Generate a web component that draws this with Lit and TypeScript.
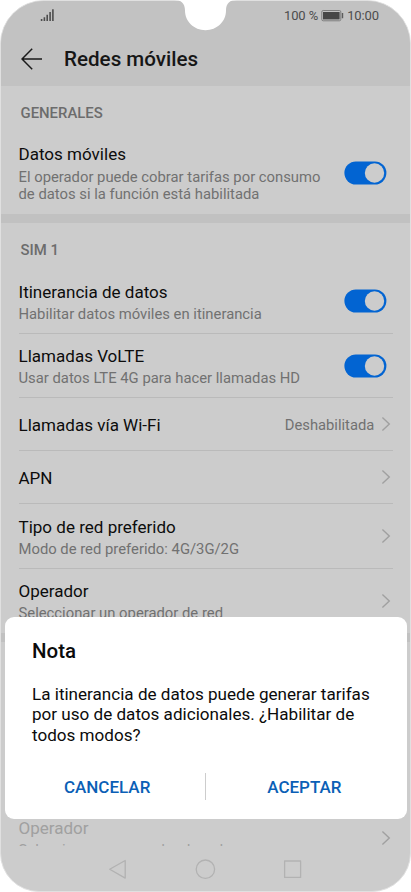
import { LitElement, html, svg, css, nothing } from "lit";
import { customElement, property } from "lit/decorators.js";

@customElement("status-bar")
class StatusBar extends LitElement {
  static styles = css`
    :host { display: flex; justify-content: space-between; height: 30px; padding: 0 31px 0 39px; color: #4d4d4d; }
    .right { display: flex; align-items: flex-start; font-size: 13px; line-height: 16px; padding-top: 7px; letter-spacing: -0.1px; }
    svg { display: block; }
    .signal { margin-top: 7px; }
    .battery { margin: 1px 3px 0 3px; }
  `;
  render() {
    return html`
      <svg class="signal" width="15" height="14" viewBox="0 0 15 14" fill="#4d4d4d">
        <path d="M.8 11h1.6v2H.8zM3.6 9.3h1.6V13H3.6zM6.4 6.7H8V13H6.4zM9.3 4h1.6v9H9.3zM12.1 1.3h1.6V13h-1.6z" />
      </svg>
      <div class="right">
        <span>100 %</span>
        <svg class="battery" width="23" height="13" viewBox="0 0 23 13">
          <rect x="0.8" y="1.5" width="19" height="10.3" rx="1.4" fill="none" stroke="#777" stroke-width="0.9" />
          <rect x="2" y="3" width="16.6" height="7.4" fill="#474747" />
          <path d="M20.8 4h1.4v5.2h-1.4z" fill="#5c5c5c" />
        </svg>
        <span>10:00</span>
      </div>
    `;
  }
}

@customElement("settings-row")
class SettingsRow extends LitElement {
  @property() label = "";
  @property() detail = "";
  @property() value = "";
  @property() control = "chevron";

  static styles = css`
    :host { display: flex; align-items: center; justify-content: space-between; box-sizing: border-box; margin-left: 17.5px; margin-right: 17.5px; border-bottom: 1px solid #bababa; }
    .text { padding-top: 2px; }
    .title { font-size: 17.05px; line-height: 20px; color: #0c0c0c; white-space: nowrap; }
    .detail { font-size: 14.82px; line-height: 17.5px; color: #717171; margin: 4.2px 0 -0.9px; white-space: pre; }
    .end { display: flex; align-items: center; flex: none; }
    .value { font-size: 14.75px; line-height: 18px; color: #717171; margin-right: 6.5px; padding-top: 1px; }
    .chevron { display: block; margin-right: 1.7px; }
    .toggle { display: block; margin-right: 5.8px; }
    :host([disabled]) .title, :host([disabled]) .detail { color: #a0a0a0; }
    :host([last]) { border-bottom-color: transparent; }
  `;

  render() {
    return html`
      <div class="text">
        <div class="title">${this.label}</div>
        ${this.detail ? html`<div class="detail">${this.detail}</div>` : nothing}
      </div>
      <div class="end">
        ${this.value ? html`<span class="value">${this.value}</span>` : nothing}
        ${this.control === "toggle"
          ? html`<svg class="toggle" width="43" height="24" viewBox="0 0 43 24">
              <rect x="0.4" y="0.5" width="42" height="23" rx="11.5" fill="#0264d2" />
              <circle cx="30.5" cy="12" r="9.7" fill="#ccc" />
            </svg>`
          : html`<svg class="chevron" width="10" height="16" viewBox="0 0 10 16">
              <path d="M1.4 1.4 8.3 8 1.4 14.6" fill="none" stroke="#a0a0a0" stroke-width="1.4" />
            </svg>`}
      </div>
    `;
  }
}

@customElement("confirm-dialog")
class ConfirmDialog extends LitElement {
  static styles = css`
    :host { display: flex; flex-direction: column; box-sizing: border-box; background: #fff; border-radius: 9px; color: #0b0b0b; padding-top: 21px; }
    .heading { font-size: 20.5px; line-height: 26px; font-weight: 500; padding-left: 27px; }
    .message { font-size: 17.08px; line-height: 20.4px; padding-left: 27px; margin-top: 20px; white-space: pre; }
    .actions { display: flex; align-items: center; margin-top: 28px; height: 27px; }
    .action { flex: 1; text-align: center; font: inherit; font-size: 17px; font-weight: 500; color: #0b5fb6; background: none; border: 0; padding: 0; }
    .rule { width: 1px; height: 27px; background: #cdcdcd; }
    .first { padding-left: 4px; }
    .second { padding-right: 4px; }
  `;
  render() {
    return html`
      <div class="heading">Nota</div>
      <div class="message">${"La itinerancia de datos puede generar tarifas\npor uso de datos adicionales. ¿Habilitar de\ntodos modos?"}</div>
      <div class="actions">
        <button class="action first">CANCELAR</button>
        <div class="rule"></div>
        <button class="action second">ACEPTAR</button>
      </div>
    `;
  }
}

@customElement("app-root")
class AppRoot extends LitElement {
  static styles = css`
    :host { display: block; width: 411px; height: 892px; background: #fff; position: relative; overflow: hidden; font-family: Roboto, sans-serif; }
    .phone { box-sizing: border-box; width: 411px; height: 892px; border: 1px solid #e0e0e0; border-radius: 44px 44px 39px 39px; overflow: hidden; background: #ccc; display: flex; flex-direction: column; }
    .top { flex: none; height: 85px; background: #c2c2c2; }
    .bar { display: flex; align-items: center; height: 56px; padding-left: 20px; }
    .bar svg { display: block; margin-right: 21px; }
    .bar-title { font-size: 20.6px; line-height: 26px; font-weight: 500; color: #161616; }
    .list { flex: none; height: 760px; overflow: hidden; }
    .caption { box-sizing: border-box; height: 46px; padding: 18px 0 0 19.5px; font-size: 14.9px; line-height: 18px; font-weight: 500; color: #6c6c6c; }
    .band { height: 9px; background: #c1c1c1; }
    .h82 { height: 82px; }
    .h65 { height: 65px; }
    .h64 { height: 64px; }
    .h53 { height: 53px; }
    .spacer { height: 164px; }
    .nav { flex: 1; display: flex; justify-content: center; align-items: center; gap: 63.5px; padding: 1px 1px 0 0; }
    .notch { position: absolute; left: 174px; top: 0; }
    .dialog { position: absolute; left: 5px; top: 617px; width: 401.5px; height: 202px; }
  `;

  render() {
    return html`
      <div class="phone">
        <div class="top">
          <status-bar></status-bar>
          <div class="bar">
            <svg width="22" height="22" viewBox="0 0 22 22" fill="none" stroke="#1a1a1a" stroke-width="1.5">
              <path d="M21 11H1.5M11.2 .8 1 11l10.2 10.2" />
            </svg>
            <span class="bar-title">Redes móviles</span>
          </div>
        </div>
        <div class="list">
          <div class="caption">GENERALES</div>
          <settings-row class="h82" last label="Datos móviles" control="toggle"
            .detail=${"El operador puede cobrar tarifas por consumo\nde datos si la función está habilitada"}></settings-row>
          <div class="band"></div>
          <div class="caption">SIM 1</div>
          <settings-row class="h65" label="Itinerancia de datos" detail="Habilitar datos móviles en itinerancia" control="toggle"></settings-row>
          <settings-row class="h64" label="Llamadas VoLTE" detail="Usar datos LTE 4G para hacer llamadas HD" control="toggle"></settings-row>
          <settings-row class="h53" label="Llamadas vía Wi-Fi" value="Deshabilitada"></settings-row>
          <settings-row class="h53" label="APN"></settings-row>
          <settings-row class="h65" label="Tipo de red preferido" detail="Modo de red preferido: 4G/3G/2G"></settings-row>
          <settings-row class="h64" last label="Operador" detail="Seleccionar un operador de red"></settings-row>
          <div class="band"></div>
          <div class="spacer"></div>
          <settings-row class="h64" last disabled label="Operador" detail="Seleccionar un operador de red"></settings-row>
        </div>
        <div class="nav">
          ${[
            svg`<path d="M19.2 2.5v17.6L3.7 11.3z" />`,
            svg`<circle cx="12.4" cy="11.2" r="9.2" />`,
            svg`<rect x="3.6" y="3" width="16" height="16.4" />`,
          ].map((shape) => html`<svg width="24" height="23" viewBox="0 0 24 23" fill="none" stroke="#b2b2b2" stroke-width="1.3" stroke-linejoin="round">${shape}</svg>`)}
        </div>
      </div>
      <svg class="notch" width="64" height="32" viewBox="0 0 64 32">
        <path d="M0 0C7 0 11 3 11 10.5C11 21.5 20 30.2 31.5 30.2S52 21.5 52 10.5C52 3 56 0 63 0z" fill="#fff" />
      </svg>
      <confirm-dialog class="dialog"></confirm-dialog>
    `;
  }
}
